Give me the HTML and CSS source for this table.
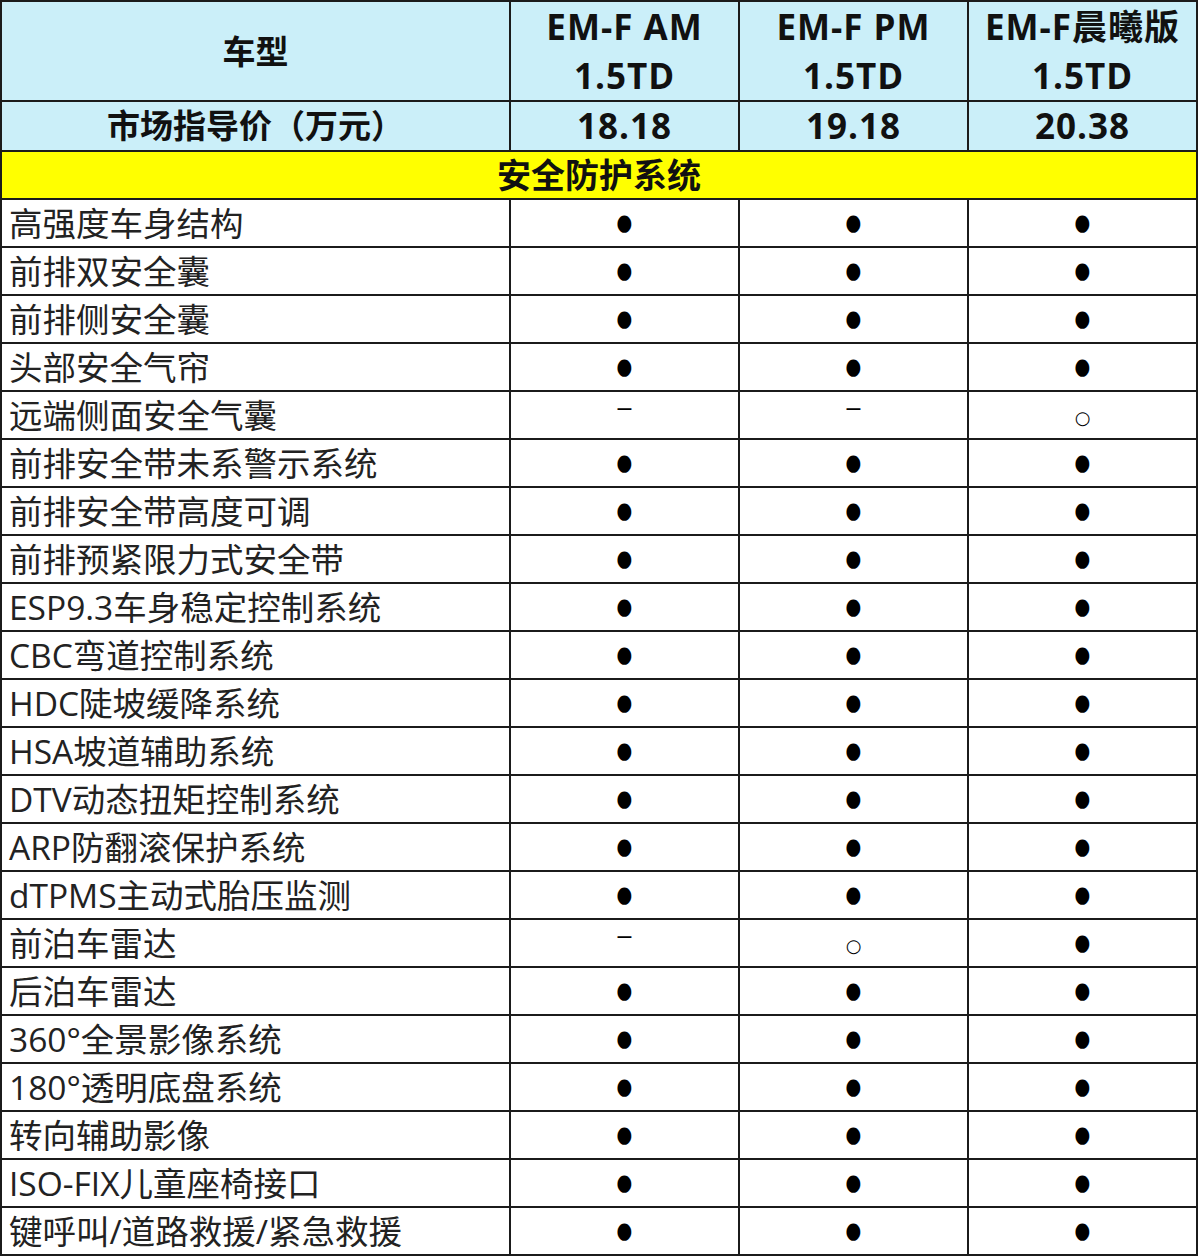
FILE: index.html
```html
<!DOCTYPE html>
<html lang="zh-CN">
<head>
<meta charset="utf-8">
<title>EM-F 安全防护系统配置表</title>
<link rel="stylesheet" href="styles.css">
</head>
<body>
<table class="spec">
  <colgroup>
    <col class="c-name"><col class="c-val"><col class="c-val"><col class="c-val">
  </colgroup>
  <thead>
    <tr class="hd-model">
      <th class="label">车型</th>
      <th>EM-F AM<br>1.5TD</th>
      <th>EM-F PM<br>1.5TD</th>
      <th>EM-F晨曦版<br>1.5TD</th>
    </tr>
    <tr class="hd-price">
      <th class="label">市场指导价（万元）</th>
      <th>18.18</th>
      <th>19.18</th>
      <th>20.38</th>
    </tr>
  </thead>
  <tbody>
    <tr class="section"><td colspan="4">安全防护系统</td></tr>
    <tr><td class="name">高强度车身结构</td><td><span class="dot">●</span></td><td><span class="dot">●</span></td><td><span class="dot">●</span></td></tr>
    <tr><td class="name">前排双安全囊</td><td><span class="dot">●</span></td><td><span class="dot">●</span></td><td><span class="dot">●</span></td></tr>
    <tr><td class="name">前排侧安全囊</td><td><span class="dot">●</span></td><td><span class="dot">●</span></td><td><span class="dot">●</span></td></tr>
    <tr><td class="name">头部安全气帘</td><td><span class="dot">●</span></td><td><span class="dot">●</span></td><td><span class="dot">●</span></td></tr>
    <tr><td class="name">远端侧面安全气囊</td><td><span class="dash">–</span></td><td><span class="dash">–</span></td><td><span class="ring">○</span></td></tr>
    <tr><td class="name">前排安全带未系警示系统</td><td><span class="dot">●</span></td><td><span class="dot">●</span></td><td><span class="dot">●</span></td></tr>
    <tr><td class="name">前排安全带高度可调</td><td><span class="dot">●</span></td><td><span class="dot">●</span></td><td><span class="dot">●</span></td></tr>
    <tr><td class="name">前排预紧限力式安全带</td><td><span class="dot">●</span></td><td><span class="dot">●</span></td><td><span class="dot">●</span></td></tr>
    <tr><td class="name">ESP9.3车身稳定控制系统</td><td><span class="dot">●</span></td><td><span class="dot">●</span></td><td><span class="dot">●</span></td></tr>
    <tr><td class="name">CBC弯道控制系统</td><td><span class="dot">●</span></td><td><span class="dot">●</span></td><td><span class="dot">●</span></td></tr>
    <tr><td class="name">HDC陡坡缓降系统</td><td><span class="dot">●</span></td><td><span class="dot">●</span></td><td><span class="dot">●</span></td></tr>
    <tr><td class="name">HSA坡道辅助系统</td><td><span class="dot">●</span></td><td><span class="dot">●</span></td><td><span class="dot">●</span></td></tr>
    <tr><td class="name">DTV动态扭矩控制系统</td><td><span class="dot">●</span></td><td><span class="dot">●</span></td><td><span class="dot">●</span></td></tr>
    <tr><td class="name">ARP防翻滚保护系统</td><td><span class="dot">●</span></td><td><span class="dot">●</span></td><td><span class="dot">●</span></td></tr>
    <tr><td class="name">dTPMS主动式胎压监测</td><td><span class="dot">●</span></td><td><span class="dot">●</span></td><td><span class="dot">●</span></td></tr>
    <tr><td class="name">前泊车雷达</td><td><span class="dash">–</span></td><td><span class="ring">○</span></td><td><span class="dot">●</span></td></tr>
    <tr><td class="name">后泊车雷达</td><td><span class="dot">●</span></td><td><span class="dot">●</span></td><td><span class="dot">●</span></td></tr>
    <tr><td class="name">360°全景影像系统</td><td><span class="dot">●</span></td><td><span class="dot">●</span></td><td><span class="dot">●</span></td></tr>
    <tr><td class="name">180°透明底盘系统</td><td><span class="dot">●</span></td><td><span class="dot">●</span></td><td><span class="dot">●</span></td></tr>
    <tr><td class="name">转向辅助影像</td><td><span class="dot">●</span></td><td><span class="dot">●</span></td><td><span class="dot">●</span></td></tr>
    <tr><td class="name">ISO-FIX儿童座椅接口</td><td><span class="dot">●</span></td><td><span class="dot">●</span></td><td><span class="dot">●</span></td></tr>
    <tr><td class="name">键呼叫/道路救援/紧急救援</td><td><span class="dot">●</span></td><td><span class="dot">●</span></td><td><span class="dot">●</span></td></tr>
  </tbody>
</table>
</body>
</html>
```

FILE: styles.css
```css
html, body {
  margin: 0;
  padding: 0;
  background: #ffffff;
}

body {
  font-family: "Open Sans", "Noto Sans CJK SC", sans-serif;
  color: #1a1a1a;
}

.spec {
  border-collapse: collapse;
  table-layout: fixed;
  width: 1198px;
  margin: 0;
}

.c-name { width: 509px; }
.c-val { width: 229px; }

.spec th,
.spec td {
  border: 2px solid #1b1b1b;
  padding: 0;
  text-align: center;
  vertical-align: middle;
}

.spec th {
  background: #cbeff9;
  font-weight: 700;
  font-size: 35px;
  letter-spacing: 1px;
  color: #111;
}

.spec th.label {
  font-size: 33px;
  letter-spacing: 0;
}

.hd-model th {
  height: 98px;
  line-height: 49px;
}

.hd-price th {
  height: 48px;
  line-height: 48px;
}

.section td {
  background: #ffff00;
  height: 47px;
  font-weight: 700;
  font-size: 34px;
  line-height: 47px;
  color: #111;
}

.spec tbody td {
  height: 46px;
  line-height: 46px;
}

.spec td.name {
  text-align: left;
  padding-left: 7px;
  font-size: 33.5px;
  font-weight: 400;
  color: #222;
  white-space: nowrap;
}

.dot {
  display: inline-block;
  font-family: "DejaVu Sans", sans-serif;
  font-size: 19px;
  line-height: 1;
  color: #000;
  transform: scale(0.95, 1.2);
}

.ring {
  display: inline-block;
  font-family: "DejaVu Sans", sans-serif;
  font-size: 18px;
  line-height: 1;
  color: #000;
  transform: translateY(3px);
}

.dash {
  display: inline-block;
  font-family: "Liberation Sans", sans-serif;
  font-size: 25px;
  line-height: 1;
  color: #000;
  transform: translateY(-5px);
}
```
